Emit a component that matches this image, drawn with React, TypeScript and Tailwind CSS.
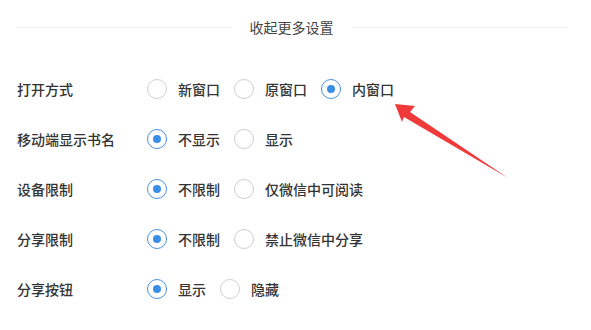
const font = { fontFamily: '"Noto Sans CJK SC", "Noto Sans", sans-serif' }

type Row = { label: string; options: string[]; selected: number }

const rows: Row[] = [
  { label: '打开方式', options: ['新窗口', '原窗口', '内窗口'], selected: 2 },
  { label: '移动端显示书名', options: ['不显示', '显示'], selected: 0 },
  { label: '设备限制', options: ['不限制', '仅微信中可阅读'], selected: 0 },
  { label: '分享限制', options: ['不限制', '禁止微信中分享'], selected: 0 },
  { label: '分享按钮', options: ['显示', '隐藏'], selected: 0 },
]

function Radio({ checked }: { checked: boolean }) {
  return (
    <span
      className={
        checked
          ? 'flex h-5 w-5 shrink-0 items-center justify-center rounded-full border border-[#4a90e2] bg-white'
          : 'flex h-5 w-5 shrink-0 items-center justify-center rounded-full border border-[#cfcfcf] bg-white'
      }
    >
      {checked && <span className="h-2 w-2 rounded-full bg-[#3b8ee8]" />}
    </span>
  )
}

export default function App() {
  return (
    <div className="relative h-[330px] w-[591px] overflow-hidden bg-white text-[14px] text-[#333]" style={font}>
      {/* header */}
      <div className="mt-[17px] flex h-5 items-center pl-4 pr-6">
        <div className="h-px flex-1 bg-[#ebebeb]" />
        <span className="mx-[19px] leading-5 text-[#444]">收起更多设置</span>
        <div className="h-px flex-1 bg-[#ebebeb]" />
      </div>

      <div className="mt-[27px] flex flex-col pl-[17px]">
        {rows.map((row) => (
          <div key={row.label} className="flex h-[50px] items-center">
            <div className="w-[130px] shrink-0 font-medium leading-5">{row.label}</div>
            <div className="flex items-center">
              {row.options.map((opt, i) => (
                <label key={opt} className="mr-[14px] flex items-center">
                  <Radio checked={i === row.selected} />
                  <span className="ml-[11px] font-medium leading-5">{opt}</span>
                </label>
              ))}
            </div>
          </div>
        ))}
      </div>

      {/* annotation arrow */}
      <svg className="pointer-events-none absolute left-0 top-0" width="591" height="330" viewBox="0 0 591 330">
        <polygon points="395,104 415,106 410,112 508,178 404,117 402,122" fill="#f03a3a" />
      </svg>
    </div>
  )
}
